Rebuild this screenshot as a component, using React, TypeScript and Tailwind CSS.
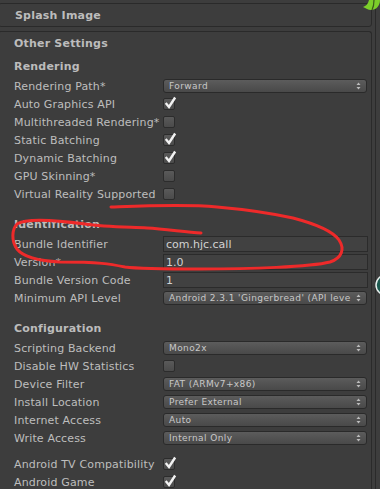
import React from "react";

const font = { fontFamily: '"DejaVu Sans", Verdana, sans-serif' };

const Arrows = () => (
  <svg width="5" height="8" viewBox="0 0 5 8" className="absolute right-[5px] top-[2px]">
    <path d="M0.5 3 L2.5 0.5 L4.5 3 Z" fill="#bdbdbd" />
    <path d="M0.5 5 L2.5 7.5 L4.5 5 Z" fill="#bdbdbd" />
  </svg>
);

const Dropdown = ({ value }: { value: string }) => (
  <div className="relative flex h-[14px] w-[204px] items-center overflow-hidden rounded-[3px] border border-[#2a2a2a] bg-linear-to-b from-[#5c5c5c] to-[#494949] pl-[5px] pr-[10px]">
    <span className="whitespace-nowrap text-[9px] leading-none tracking-[0.4px] text-[#c8c8c8]">
      {value}
    </span>
    <Arrows />
  </div>
);

const Checkbox = ({ checked }: { checked?: boolean }) => (
  <div className="relative h-[12px] w-[12px] rounded-[2px] border border-[#2c2c2c] bg-linear-to-b from-[#5a5a5a] to-[#4b4b4b]">
    {checked && (
      <svg width="14" height="14" viewBox="0 0 14 14" className="absolute left-[0px] top-[-3px]">
        <path d="M2.5 8 L5 11 L10.5 2.5" stroke="#f2f2f2" strokeWidth="2.4" fill="none" strokeLinecap="square" />
      </svg>
    )}
  </div>
);

const TextField = ({ value }: { value: string }) => (
  <div className="flex h-[16px] w-[205px] items-center border border-[#2b2b2b] bg-[#414141] pl-[2px]">
    <span className="text-[11px] leading-none text-[#d2d2d2]">{value}</span>
  </div>
);

const Row = ({ label, children }: { label: string; children?: React.ReactNode }) => (
  <div className="flex h-[18px] items-center">
    <span className="w-[164px] shrink-0 whitespace-nowrap pl-[15px] text-[11px] leading-none tracking-[0.15px] text-[#bebebe]">
      {label}
    </span>
    {children}
  </div>
);

const Section = ({ title, className = "" }: { title: string; className?: string }) => (
  <div className={`mb-[1px] flex h-[20px] items-center pl-[15px] text-[11px] font-bold leading-none tracking-[0.2px] text-[#bcbcbc] ${className}`}>
    {title}
  </div>
);

const Scribble = () => (
  <svg width="380" height="489" className="pointer-events-none absolute left-0 top-0">
    <path
      d="M111 207 C140 206 185 204 217 207 C240 209 270 213 293 218 C312 223 332 230 339 240 C345 249 342 258 330 262 C310 267 250 269 200 269 C165 269 140 269 125 267 C110 264 100 262 60 262 C40 261 24 258 17 249 C11 241 12 229 17 224 C26 218 55 220 85 224 C105 227 128 227 147 228 C165 229 185 232 201 233"
      stroke="#ee2a2a"
      strokeWidth="3"
      fill="none"
      strokeLinecap="round"
      strokeLinejoin="round"
    />
  </svg>
);

export default function App() {
  return (
    <div className="relative flex h-[489px] w-[380px] overflow-hidden bg-[#3d3d3d]" style={font}>
      <div className="w-[372px] shrink-0">
        <div className="ml-[-2px] mt-[3px] flex h-[24px] w-[374px] items-center rounded-[3px] border border-[#2a2a2a] pl-[16px] text-[11px] font-bold leading-none tracking-[0.2px] text-[#bcbcbc]">
          Splash Image
        </div>
        <div className="ml-[-2px] mt-[4px] h-[470px] w-[374px] rounded-t-[3px] border border-b-0 border-[#2a2a2a]">
          <div className="flex h-[23px] items-center pl-[15px] text-[11px] font-bold leading-none tracking-[0.2px] text-[#bcbcbc]">
            Other Settings
          </div>
          <Section title="Rendering" className="mt-[1px]" />
          <Row label="Rendering Path*">
            <Dropdown value="Forward" />
          </Row>
          <Row label="Auto Graphics API">
            <Checkbox checked />
          </Row>
          <Row label="Multithreaded Rendering*">
            <Checkbox />
          </Row>
          <Row label="Static Batching">
            <Checkbox checked />
          </Row>
          <Row label="Dynamic Batching">
            <Checkbox checked />
          </Row>
          <Row label="GPU Skinning*">
            <Checkbox />
          </Row>
          <Row label="Virtual Reality Supported">
            <Checkbox />
          </Row>

          <Section title="Identification" className="mt-[11px]" />
          <Row label="Bundle Identifier">
            <TextField value="com.hjc.call" />
          </Row>
          <Row label="Version*">
            <TextField value="1.0" />
          </Row>
          <Row label="Bundle Version Code">
            <TextField value="1" />
          </Row>
          <Row label="Minimum API Level">
            <Dropdown value="Android 2.3.1 'Gingerbread' (API leve" />
          </Row>

          <Section title="Configuration" className="mt-[11px]" />
          <Row label="Scripting Backend">
            <Dropdown value="Mono2x" />
          </Row>
          <Row label="Disable HW Statistics">
            <Checkbox />
          </Row>
          <Row label="Device Filter">
            <Dropdown value="FAT (ARMv7+x86)" />
          </Row>
          <Row label="Install Location">
            <Dropdown value="Prefer External" />
          </Row>
          <Row label="Internet Access">
            <Dropdown value="Auto" />
          </Row>
          <Row label="Write Access">
            <Dropdown value="Internal Only" />
          </Row>

          <div className="mt-[8px]">
            <Row label="Android TV Compatibility">
              <Checkbox checked />
            </Row>
            <Row label="Android Game">
              <Checkbox checked />
            </Row>
          </div>
        </div>
      </div>
      <div className="relative flex-1">
        <div className="absolute left-[3px] top-0 h-full w-[1px] bg-[#2a2a2a]" />
      </div>

      <svg width="20" height="14" className="pointer-events-none absolute left-[362px] top-0">
        <path d="M1 7 C4 6 6 4 7 0 L18 0 C18 6 14 10 9 10 C6 10 4 8 1 7 Z" fill="#7ccf2a" />
        <path d="M12 0 C12 5 11 8 10 10" stroke="#3a5a1a" strokeWidth="1.2" fill="none" />
      </svg>
      <svg width="8" height="24" className="pointer-events-none absolute left-[375px] top-[273px]">
        <circle cx="11" cy="12" r="10" fill="#1d5a50" stroke="#e8f0ee" strokeWidth="1.5" />
      </svg>

      <Scribble />
    </div>
  );
}
